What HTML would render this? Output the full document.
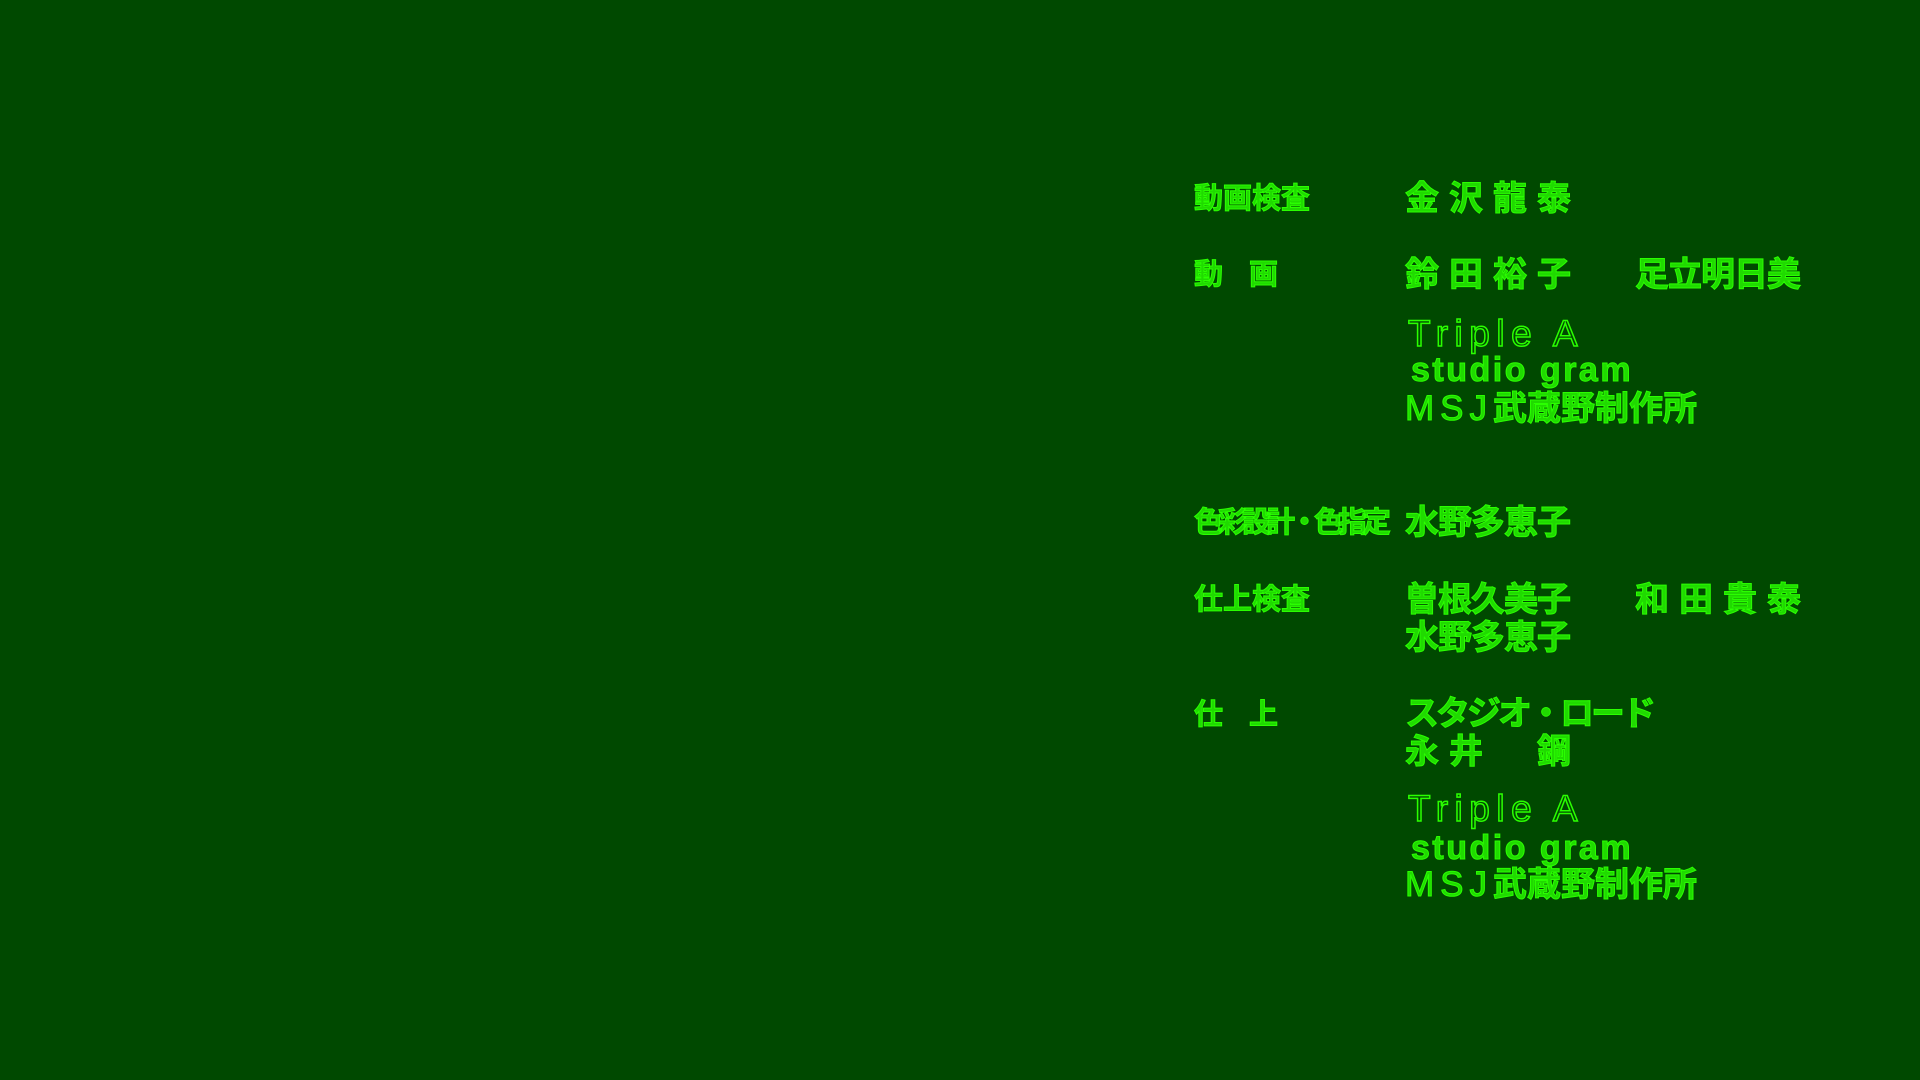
<!DOCTYPE html>
<html><head><meta charset="utf-8"><style>
html,body{margin:0;padding:0}
body{width:1920px;height:1080px;background:#004900;position:relative;overflow:hidden;
font-family:"Liberation Sans","Noto Sans CJK JP",sans-serif;font-weight:bold;color:#25f500}
.t{position:absolute;white-space:nowrap;line-height:1;font-size:34px;-webkit-text-stroke:1px #2aff00;color:rgba(40,255,0,0.8)}
.l{font-size:29px}
.e{font-family:"Liberation Sans",sans-serif;font-weight:normal;-webkit-text-stroke:1.5px #2aff00;color:transparent}
.s{font-family:"Liberation Sans",sans-serif;font-size:34px;letter-spacing:2.5px}
.m{font-family:"Liberation Sans",sans-serif;font-weight:normal;letter-spacing:6px;font-size:35px}
</style></head><body>
<div class="t l" style="left:1194px;top:185px">動画検査</div>
<div class="t" style="left:1405px;top:182px;letter-spacing:10px">金沢龍泰</div>

<div class="t l" style="left:1194px;top:261px;letter-spacing:26px">動画</div>
<div class="t" style="left:1405px;top:258px;letter-spacing:10px">鈴田裕子</div>
<div class="t" style="left:1635px;top:258px;letter-spacing:-1px">足立明日美</div>

<div class="t e" style="left:1408px;top:315px;font-size:37px;letter-spacing:6.5px">Triple A</div>
<div class="t s" style="left:1411px;top:353px">studio gram</div>
<div class="t" style="left:1405px;top:391px"><span class="m">MSJ</span><span>武蔵野制作所</span></div>

<div class="t l" style="left:1194px;top:509px;letter-spacing:-5px">色彩設計・色指定</div>
<div class="t" style="left:1405px;top:506px;letter-spacing:-1px">水野多恵子</div>

<div class="t l" style="left:1194px;top:586px">仕上検査</div>
<div class="t" style="left:1405px;top:583px;letter-spacing:-1px">曽根久美子</div>
<div class="t" style="left:1635px;top:583px;letter-spacing:10px">和田貴泰</div>
<div class="t" style="left:1405px;top:621px;letter-spacing:-1px">水野多恵子</div>

<div class="t l" style="left:1194px;top:701px;letter-spacing:26px">仕上</div>
<div class="t" style="left:1405px;top:697px;letter-spacing:-3px">スタジオ・ロード</div>
<div class="t" style="left:1405px;top:735px;letter-spacing:10px">永井　鋼</div>

<div class="t e" style="left:1408px;top:790px;font-size:37px;letter-spacing:6.5px">Triple A</div>
<div class="t s" style="left:1411px;top:831px">studio gram</div>
<div class="t" style="left:1405px;top:867px"><span class="m">MSJ</span><span>武蔵野制作所</span></div>
</body></html>
